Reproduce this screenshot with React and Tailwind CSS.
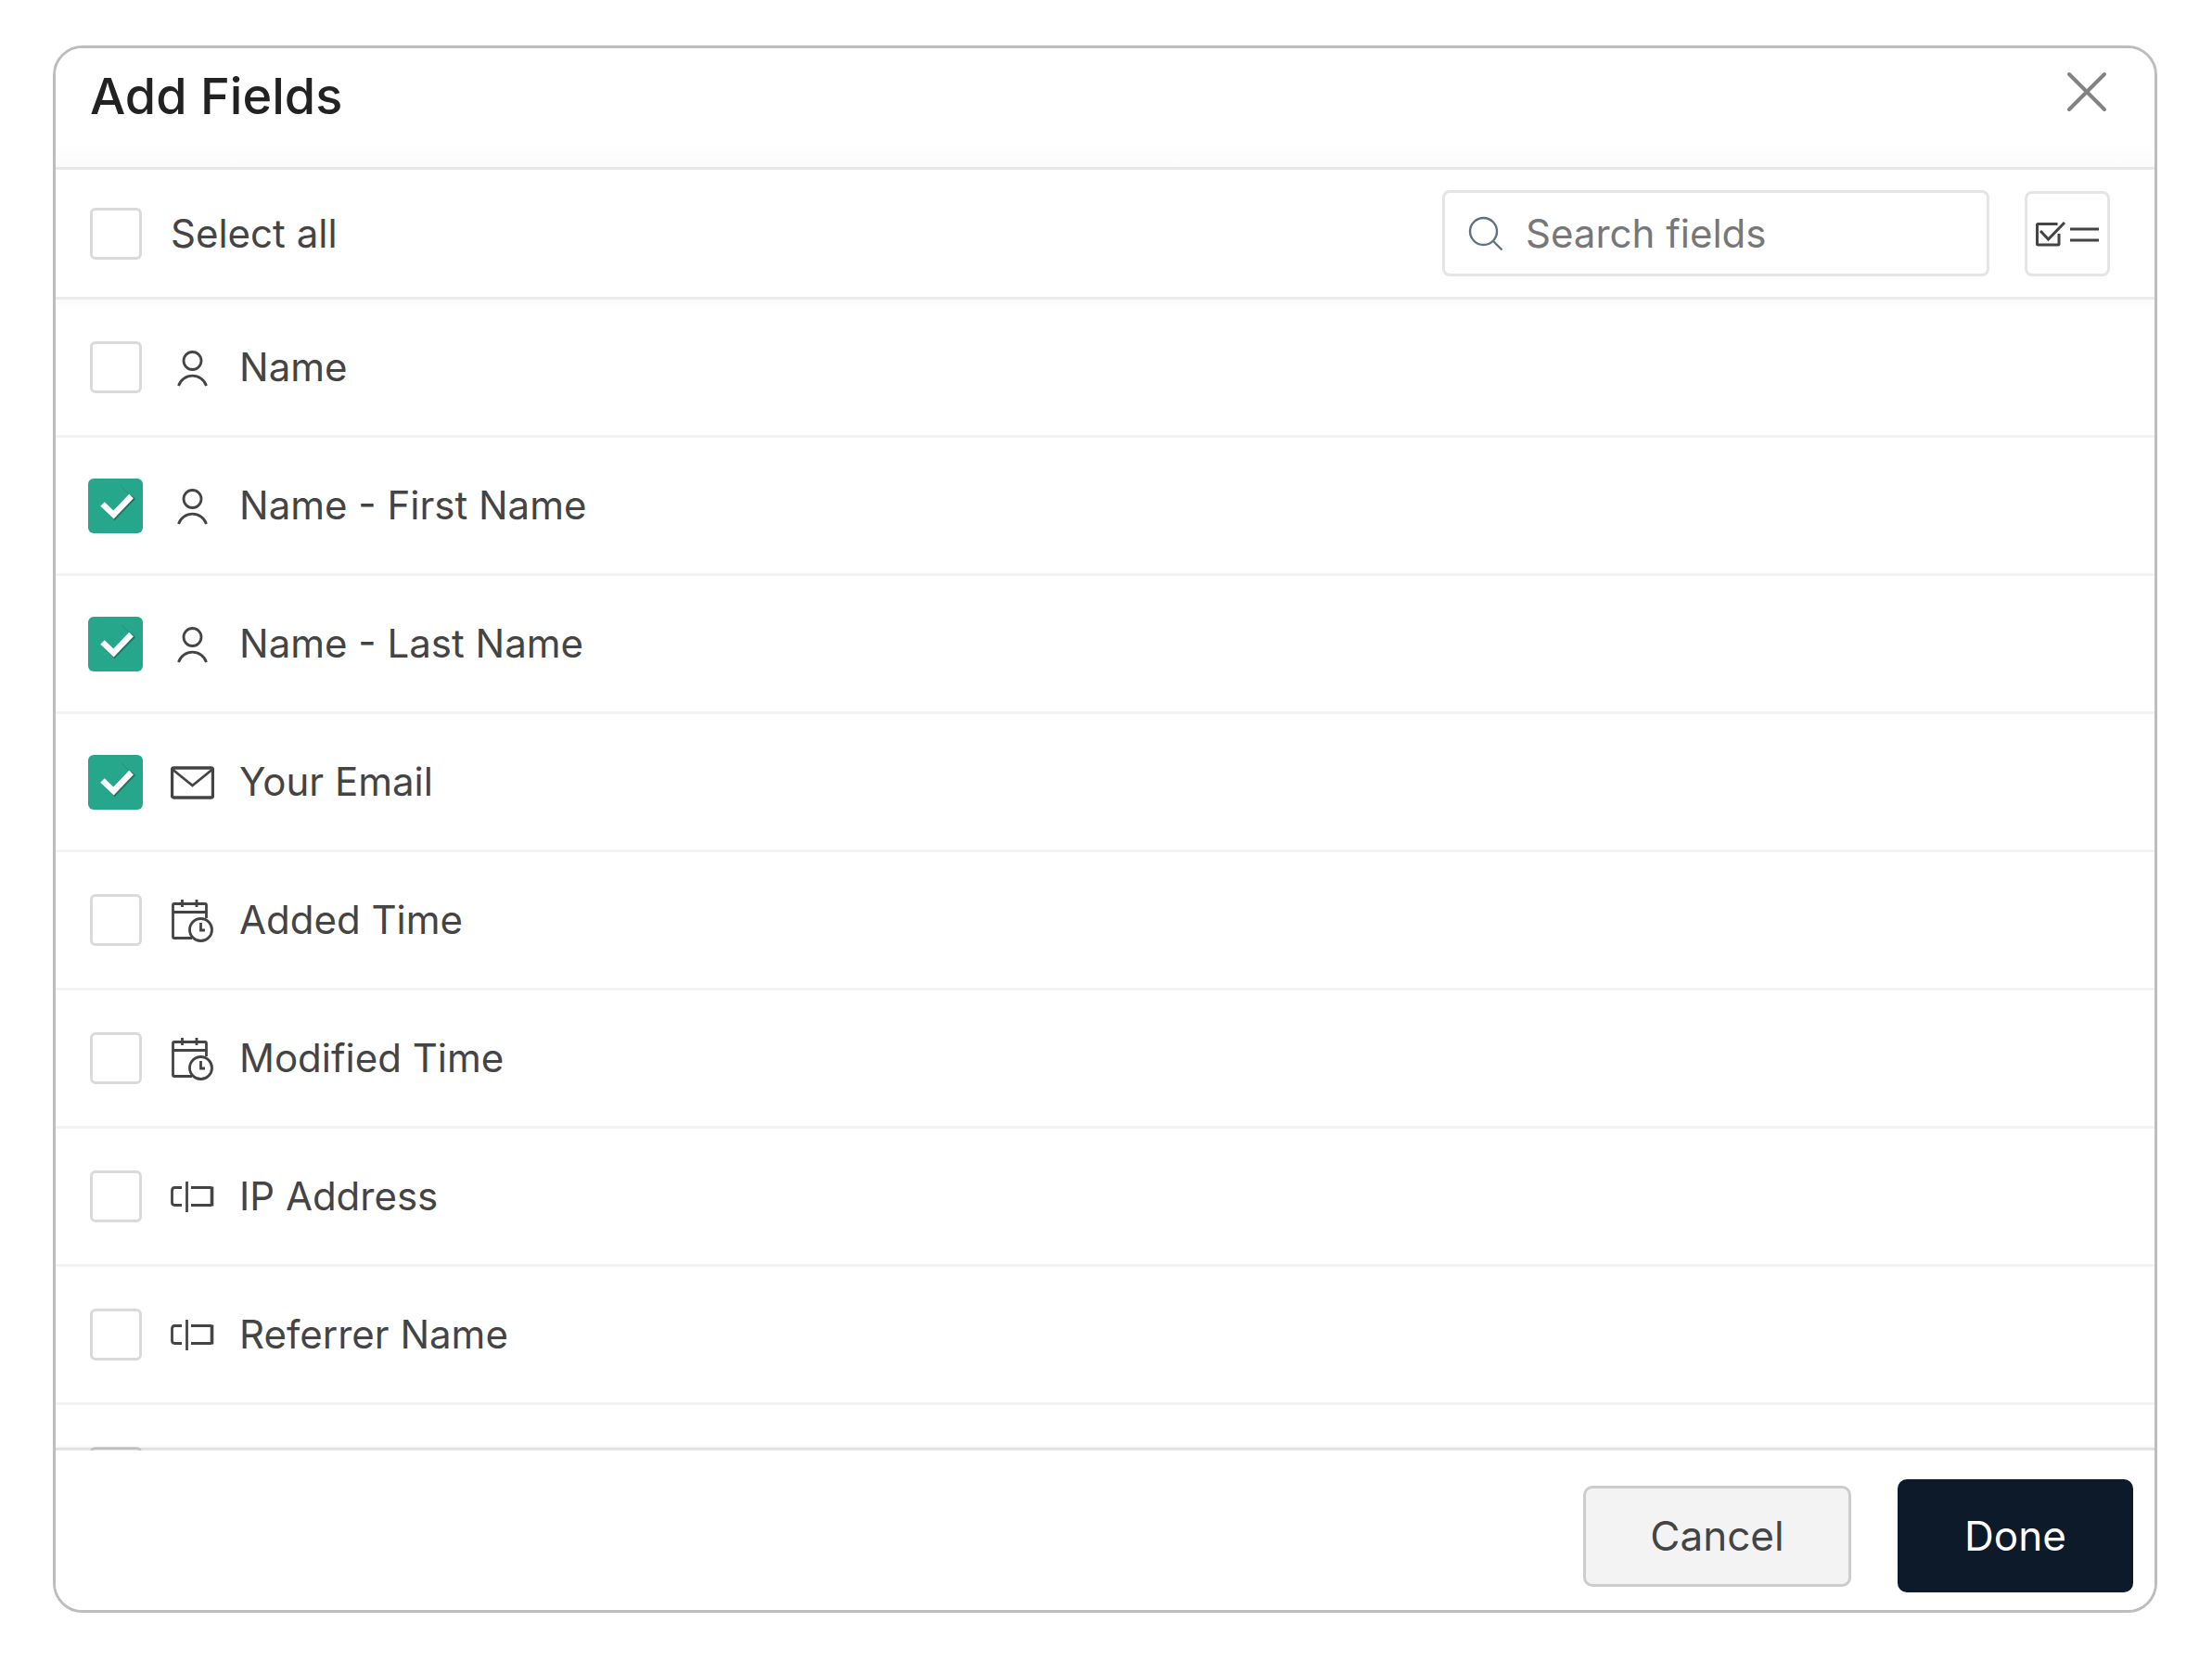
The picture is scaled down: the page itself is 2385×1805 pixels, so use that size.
import { useState } from "react";

const fields = [
  { id: "name", label: "Name", icon: "person" },
  { id: "first-name", label: "Name - First Name", icon: "person" },
  { id: "last-name", label: "Name - Last Name", icon: "person" },
  { id: "email", label: "Your Email", icon: "mail" },
  { id: "added-time", label: "Added Time", icon: "calendar" },
  { id: "modified-time", label: "Modified Time", icon: "calendar" },
  { id: "ip-address", label: "IP Address", icon: "text" },
  { id: "referrer-name", label: "Referrer Name", icon: "text" },
  { id: "more", label: "", icon: null },
];

function PersonIcon() {
  return (
    <>
      <circle cx="23.5" cy="16" r="9.5" />
      <path d="M8.5 43a15.8 15.8 0 0 1 30 0" />
    </>
  );
}

function MailIcon() {
  return (
    <>
      <rect x="1.5" y="8" width="44" height="32" rx="2" strokeWidth="3.4" />
      <path d="M2.5 10l21 17 21-17" />
    </>
  );
}

function CalendarIcon() {
  return (
    <>
      <path d="M23 42.5H4q-1.500 0-1.500-1.500V7q0-1.500 1.500-1.500H37q1.500 0 1.500 1.500V21" />
      <path d="M2.500 14.500H38.500M12.500 1v8M28 1v8" />
      <circle cx="32.500" cy="33.500" r="12" />
      <path d="M32.500 26v8h4.500" />
    </>
  );
}

function TextFieldIcon() {
  return (
    <>
      <path d="M12 13.500H4.500q-3 0-3 3v13q0 3 3 3H12" />
      <path d="M17.500 7v33" />
      <path d="M22 13.500H44M44 32.500H22" />
      <path d="M44.500 12.500v21" strokeWidth="3.6" />
    </>
  );
}

const icons = {
  person: PersonIcon,
  mail: MailIcon,
  calendar: CalendarIcon,
  text: TextFieldIcon,
};

function FieldIcon({ name }) {
  const Shape = icons[name];
  return (
    <svg
      className="size-[47px] shrink-0"
      viewBox="0 0 47 47"
      fill="none"
      stroke="#444444"
      strokeWidth="2.8"
      aria-hidden="true"
    >
      {Shape && <Shape />}
    </svg>
  );
}

function Checkbox({ id, checked, onChange, label }) {
  return (
    <span className="grid size-[59px] shrink-0 place-items-center">
      <input
        id={id}
        type="checkbox"
        checked={checked}
        onChange={onChange}
        aria-label={label}
        className="col-start-1 row-start-1 size-14 appearance-none rounded-md border-3 border-[#dadada] bg-white checked:size-[59px] checked:border-0 checked:bg-[#26a68a]"
      />
      {checked && (
        <svg
          className="pointer-events-none col-start-1 row-start-1 size-[59px]"
          viewBox="0 0 59 59"
          fill="none"
          aria-hidden="true"
        >
          <path d="M17 29.500L28.500 41 49 20" stroke="#1c7763" strokeWidth="6" />
          <path d="M36 9L44 17" stroke="#1f9179" strokeWidth="1" />
          <path d="M15.500 27.500L27.500 39 46.500 19" stroke="#ffffff" strokeWidth="6.500" />
        </svg>
      )}
    </span>
  );
}

export default function App() {
  const [selected, setSelected] = useState(["first-name", "last-name", "email"]);
  const [query, setQuery] = useState("");

  const allSelected = selected.length === fields.length;
  const visible = fields.filter((f) =>
    f.label.toLowerCase().includes(query.toLowerCase())
  );

  const toggle = (id) => {
    setSelected((prev) =>
      prev.includes(id) ? prev.filter((x) => x !== id) : [...prev, id]
    );
  };

  return (
    <main className="bg-white pt-[49px] pr-[59px] pb-[66px] pl-[57px] font-['Inter',sans-serif] text-[42px] leading-[56px] text-[#444444]">
      <section
        role="dialog"
        aria-labelledby="dialog-title"
        className="overflow-hidden rounded-[32px] border-3 border-[#bdbdbd] bg-white"
      >
        {/* Header */}
        <header className="flex h-[131px] items-start justify-between border-b-3 border-[#e8e8e8] bg-linear-to-b from-white from-80% to-[#fbfbfb] pt-4 pr-[42px] pl-[37px]">
          <h2
            id="dialog-title"
            className="text-[54px] leading-[72px] font-medium text-[#222222]"
          >
            Add Fields
          </h2>
          <button
            type="button"
            aria-label="Close"
            className="grid size-[62px] place-items-center"
          >
            <svg
              className="size-[44px]"
              viewBox="0 0 44 44"
              fill="none"
              stroke="#828282"
              strokeWidth="4"
              strokeLinecap="round"
            >
              <path d="M3 3l38 38M41 3L3 41" />
            </svg>
          </button>
        </header>

        {/* Select all + search */}
        <div className="relative flex h-[140px] items-center justify-between border-b-3 border-[#ebebeb] pr-12 pl-[35px] shadow-[0_4px_12px_rgba(0,0,0,0.03)]">
          <div className="flex items-center gap-[30px]">
            <Checkbox
              id="select-all"
              checked={allSelected}
              onChange={() =>
                setSelected(allSelected ? [] : fields.map((f) => f.id))
              }
            />
            <label htmlFor="select-all">Select all</label>
          </div>
          <div className="flex items-center gap-[38px]">
            <label className="flex h-[93px] w-[590px] items-center gap-6 rounded-lg border-3 border-[#e5e5e5] px-[25px]">
              <svg
                className="size-[38px] shrink-0"
                viewBox="0 0 38 38"
                fill="none"
                stroke="#5f7183"
                strokeWidth="2.4"
                aria-hidden="true"
              >
                <circle cx="16.500" cy="16.500" r="14.500" />
                <path d="M27 27l9.500 9.500" />
              </svg>
              <input
                type="text"
                aria-label="Search fields"
                placeholder="Search fields"
                value={query}
                onChange={(e) => setQuery(e.target.value)}
                className="w-full min-w-0 bg-transparent outline-none placeholder:text-[#777777]"
              />
            </label>
            <button
              type="button"
              aria-label="Show selected fields"
              className="grid size-[92px] place-items-center rounded-lg border-3 border-[#e5e5e5]"
            >
              <svg
                className="h-[28px] w-[70px]"
                viewBox="0 0 70 28"
                fill="none"
                stroke="#444444"
                strokeWidth="3"
                aria-hidden="true"
              >
                <path d="M24.500 3.500H3.500q-1 0-1 1V25q0 1 1 1H25q1 0 1-1V14" />
                <path d="M6 11l8.500 9L32 2" />
                <path d="M38 9h31M38 21h31" />
              </svg>
            </button>
          </div>
        </div>

        {/* Field list */}
        <ul className="h-[1241px] overflow-hidden">
          {visible.map((field) => (
            <li
              key={field.id}
              className="flex h-[149px] items-center border-b-3 border-[#f3f3f3] pl-[35px]"
            >
              <Checkbox
                id={field.id}
                checked={selected.includes(field.id)}
                onChange={() => toggle(field.id)}
                label={field.label || "More fields"}
              />
              <label
                htmlFor={field.id}
                className="flex items-center gap-[27px] pl-[30px]"
              >
                <FieldIcon name={field.icon} />
                {field.label}
              </label>
            </li>
          ))}
        </ul>

        {/* Footer */}
        <footer className="relative -mt-[3px] flex items-center justify-end gap-[50px] border-t-3 border-black/10 bg-white bg-clip-padding pt-[31px] pr-[23px] pb-[19px] text-[44px] shadow-[0_-1px_3px_rgba(0,0,0,0.05)]">
          <button
            type="button"
            className="h-[109px] w-[289px] rounded-[10px] border-3 border-[#cccccc] bg-[#f3f3f3]"
          >
            Cancel
          </button>
          <button
            type="button"
            className="h-[122px] w-[254px] rounded-[10px] bg-[#0d1a2a] text-white"
          >
            Done
          </button>
        </footer>
      </section>
    </main>
  );
}
